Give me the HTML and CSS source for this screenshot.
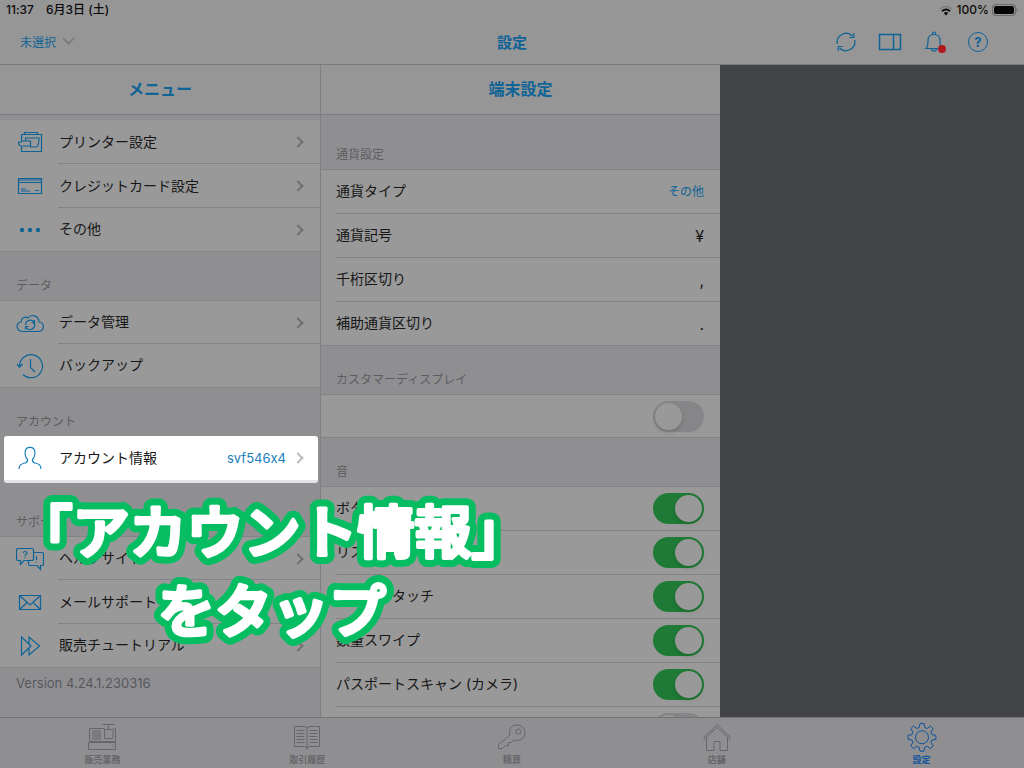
FILE: index.html
```html
<!DOCTYPE html>
<html lang="ja">
<head>
<meta charset="utf-8">
<title>設定</title>
<link rel="stylesheet" href="styles.css">
</head>
<body>
<div class="app">
  <header class="top">
    <div class="status">
      <span>11:37</span><span class="status-date">6月3日 (土)</span>
      <svg class="wifi" width="14" height="11" viewBox="0 0 14 11"><path d="M1 4Q7-1 13 4" fill="none" stroke="#7c7c7c" stroke-width="1.6"/><path d="M3 6.200Q7 2.800 11 6.200" fill="none" stroke="#0b0b0b" stroke-width="1.800"/><path d="M4.800 8Q7 6.200 9.200 8L7 10.500z" fill="#0b0b0b"/></svg>
      <span>100%</span>
      <svg class="battery" width="26" height="12" viewBox="0 0 26 12"><rect x=".5" y=".5" width="23" height="11" rx="3.500" fill="none" stroke="#6c6c6c"/><rect x="2" y="2" width="20" height="8" rx="2" fill="#050505" stroke="none"/><path d="M24.500 4v4q1.200-.5 1.200-2t-1.200-2z" fill="#6c6c6c" stroke="none"/></svg>
    </div>
    <nav class="bar">
      <button class="picker">未選択
        <svg width="13" height="8" viewBox="0 0 13 8"><path d="M1 1l5.500 5.500L12 1" fill="none" stroke="#777" stroke-width="1.600"/></svg>
      </button>
      <h1>設定</h1>
      <div class="tools">
        <button aria-label="更新"><svg width="22" height="22" viewBox="0 0 22 22"><path d="M2.300 13A9 9 0 0 1 17.500 5M19.700 9A9 9 0 0 1 4.500 17M18.800 2v4.500h-4.500M3.200 20v-4.500h4.500"/></svg></button>
        <button aria-label="表示"><svg width="24" height="18" viewBox="0 0 24 18"><path d="M1.500 1.500h21v15h-21zM15.500 1.500v15" stroke-width="1.500"/></svg></button>
        <button aria-label="通知"><svg width="24" height="24" viewBox="0 0 24 24"><path d="M4 18.500c2-1.500 2-3.500 2-8 0-4 2.500-6 6-6s6 2 6 6c0 4.500 0 6.500 2 8zM10.500 4.500V3.500a1.500 1.500 0 0 1 3 0v1M9.500 18.500a2.500 2.500 0 0 0 5 0"/><circle cx="20" cy="19" r="4" class="dot"/></svg></button>
        <button aria-label="ヘルプ" class="help"><span>?</span></button>
      </div>
    </nav>
  </header>

  <main class="panes">
    <section class="pane menu">
      <h2>メニュー</h2>
      <div class="scroll">
        <ul class="list first">
          <li><a href="#"><svg class="icon" viewBox="0 0 28 28"><path d="M5.500 13V6.500h3V4.500h13v2h4v17h-17M8.500 6.500h14M9.500 13v-3h13.500c0 5-.5 9-3 9h-6M2.500 14h3c.5 0 .5-1 1-1h8v5h-8M2.500 14c0 3 1 4 3 4M5.500 18v5.500h9"/></svg><span>プリンター設定</span><i></i></a></li>
          <li><a href="#"><svg class="icon" viewBox="0 0 28 28"><path d="M2.500 6.500h23v15h-23zM2.500 8h23M2.500 10.500h23M5 17h4.500M5 19h9M19 18.500h4"/></svg><span>クレジットカード設定</span><i></i></a></li>
          <li><a href="#"><svg class="icon" viewBox="0 0 28 28"><g class="solid"><circle cx="6" cy="14" r="2.200"/><circle cx="14" cy="14" r="2.200"/><circle cx="22" cy="14" r="2.200"/></g></svg><span>その他</span><i></i></a></li>
        </ul>
        <h3>データ</h3>
        <ul class="list">
          <li><a href="#"><svg class="icon" viewBox="0 0 28 28"><path d="M7 22.500C-.5 22.500-.5 13.500 5 13c0-4 4-6 7-4 3-4.500 11-2.500 11 4 6 .5 6 9.500-1 9.500zM9.500 16a4.800 4.800 0 0 1 8.500-3M18.500 14.500a4.800 4.800 0 0 1-8.500 4M18.500 11v3h-3M9.500 20.500v-3h3"/></svg><span>データ管理</span><i></i></a></li>
          <li><a href="#"><svg class="icon" viewBox="0 0 28 28"><path d="M3.500 14A11.500 11.500 0 1 1 7 22.500M1 12l2.500 3L6.500 12M14.500 7v8.500l4.500 4.500"/></svg><span>バックアップ</span></a></li>
        </ul>
        <h3>アカウント</h3>
        <ul class="list spot">
          <li><a href="#"><svg class="icon" viewBox="0 0 28 28"><path d="M3 25c0-4 2-5 6-6q3-1 2.500-3.500C9 13 9 10 9.200 7.500 9.500 2 18.500 2 18.800 7.500 19 10 19 13 16.500 15.500 16 18 19 19 19 19c4 1 6 2 6 6"/></svg><span>アカウント情報</span><b>svf546x4</b><i></i></a></li>
        </ul>
        <h3 class="support">サポート</h3>
        <ul class="list">
          <li><a href="#"><svg class="icon" viewBox="0 0 28 28"><path d="M2 3.500h14a1.500 1.500 0 0 1 1.500 1.500v9a1.500 1.500 0 0 1-1.500 1.500H8l-3.500 4v-4H2A1.500 1.500 0 0 1 .5 14V5A1.500 1.500 0 0 1 2 3.500zM17.500 7.500H26a1.500 1.500 0 0 1 1.500 1.500v10a1.500 1.500 0 0 1-1.500 1.500h-1.500v4l-3.500-4h-7a1.500 1.500 0 0 1-1.500-1.500v-3.500M20.500 11v4M20.500 16.500v1M7.200 8c0-2 3.800-2 3.800 0 0 1.500-2 1.500-2 3M9 12v1"/></svg><span>ヘルプサイト</span><i></i></a></li>
          <li><a href="#"><svg class="icon" viewBox="0 0 28 28"><path d="M3.500 7.500h21v14h-21zM3.500 7.500L14 17 24.500 7.500M3.500 21.500l7.500-7M24.500 21.500l-7.500-7"/></svg><span>メールサポート</span><i></i></a></li>
          <li><a href="#"><svg class="icon" viewBox="0 0 28 28"><path d="M5.500 5L15 14 5.500 23zM13 11.500V5l10.500 9L13 23v-6.500"/></svg><span>販売チュートリアル</span><i></i></a></li>
        </ul>
        <p class="version">Version 4.24.1.230316</p>
      </div>
    </section>

    <section class="pane detail">
      <h2>端末設定</h2>
      <div class="scroll">
        <h3 class="lead">通貨設定</h3>
        <ul class="list">
          <li><div><span>通貨タイプ</span><b class="small">その他</b></div></li>
          <li><div><span>通貨記号</span><em class="wide">¥</em></div></li>
          <li><div><span>千桁区切り</span><em>,</em></div></li>
          <li><div><span>補助通貨区切り</span><em>.</em></div></li>
        </ul>
        <h3>カスタマーディスプレイ</h3>
        <ul class="list">
          <li><div><input type="checkbox" aria-label="カスタマーディスプレイ"></div></li>
        </ul>
        <h3>音</h3>
        <ul class="list">
          <li><label><span>ボタンタッチ</span><input type="checkbox" checked></label></li>
          <li><label><span>リストタッチ</span><input type="checkbox" checked></label></li>
          <li><label><span>テンキータッチ</span><input type="checkbox" checked></label></li>
          <li><label><span>数量スワイプ</span><input type="checkbox" checked></label></li>
          <li><label><span>パスポートスキャン (カメラ)</span><input type="checkbox" checked></label></li>
          <li><div><input type="checkbox" aria-label="スキャン"></div></li>
        </ul>
      </div>
    </section>
    <div class="blank"></div>
  </main>

  <nav class="tabs">
    <a href="#"><svg viewBox="0 0 30 30"><path d="M2.500 6.500h15M2.500 6.500v13h26v-13h-2M17.500 7.500h8.500v9h-8.500zM21.500 7.500v-4M15.500 2.500h12M1.500 20.500h27v7h-27zM25 24h1M5 9h9M5 11h9M5 13h9M5 15h9M5 17h9"/></svg>販売業務</a>
    <a href="#"><svg viewBox="0 0 30 30"><path d="M2.500 4.500h10l2.500 1 2.500-1h10v20h-10l-2.500 1-2.500-1h-10zM15 5.500v22M4.500 8.500h8M4.500 11.500h8M4.500 14.500h8M4.500 17.500h8M4.500 20.500h8M17.500 8.500h8M17.500 11.500h8M17.500 14.500h8M17.500 17.500h8M17.500 20.500h8"/></svg>取引履歴</a>
    <a href="#"><svg viewBox="0 0 30 30"><path d="M13 13C11 7 15 3 20 3c5 0 8 4 8 8 0 5-5 9-11 7l-2.500 2.500h-3v3h-3l-3 3h-4v-4z"/><circle cx="21.500" cy="9.500" r="2.500"/></svg>精算</a>
    <a href="#"><svg viewBox="0 0 30 30"><path d="M1.500 15.500L15 2.500l13.500 13M1.500 18L15 5.300l13.500 12.700M4.500 15v13.500h7.500v-9h6v9h7.500V15"/></svg>店舗</a>
    <a href="#" class="on"><svg viewBox="0 0 30 30"><path d="M13 1.500h4l.8 4 2.400 1L23.500 4l2.700 2.800-2.300 3.300 1 2.500 4 .7v4l-4 .8-1 2.400 2.300 3.300-2.700 2.800-3.400-2.300-2.400 1-.7 3.900h-4l-.8-3.900-2.400-1-3.300 2.300-2.800-2.800L6 20.500l-1-2.400-3.900-.8v-4l3.900-.7 1-2.500-2.300-3.300L6.500 4l3.300 2.500 2.400-1z" stroke-linejoin="round"/><circle cx="15" cy="15.300" r="6.500"/></svg>設定</a>
  </nav>

  <svg class="callout" width="544" height="180" viewBox="0 0 544 180">
    <use href="#callout-text" class="callout-edge"/>
    <g class="callout-face"><text id="callout-text" text-anchor="middle"><tspan x="272" y="73">「アカウント情報」</tspan><tspan x="272" y="152">をタップ</tspan></text></g>
  </svg>
</div>
</body>
</html>
```
FILE: styles.css
```css
* { box-sizing: border-box; margin: 0; padding: 0; }
:root {
  --blue: #0f6396;
  --cell: #999999;
  --group: #8f8f92;
  --line: #838387;
}
body { font-family: Inter, "Noto Sans CJK JP", sans-serif; font-feature-settings: "calt" 0; font-size: 14px; color: #171717; background: var(--group); }
button { border: 0; background: none; font: inherit; color: inherit; }
a { color: inherit; text-decoration: none; }
ul { list-style: none; }
svg { fill: none; stroke: currentColor; stroke-width: 1.2; flex: none; }

.app { position: relative; height: 100vh; display: flex; flex-direction: column; overflow: hidden; }

.top { background: #969696; border-bottom: 1px solid #7b7b7e; }
.status { display: flex; align-items: center; height: 20px; padding: 0 6px; font-size: 12px; font-weight: 500; line-height: 20px; color: #0b0b0b; }
.status-date { margin-left: 12px; }
.wifi { margin: 0 4px 0 auto; stroke: none; }
.battery { margin-left: 3px; }
.bar { display: grid; grid-template-columns: 1fr auto 1fr; align-items: center; height: 44px; padding: 0 20px; color: var(--blue); }
.bar h1 { padding-bottom: 2px; font-size: 15px; font-weight: 700; }
.picker { display: flex; align-items: center; gap: 6px; justify-self: start; padding-bottom: 2px; font-size: 12px; }
.tools { display: flex; justify-content: flex-end; gap: 20px; margin-right: 14px; }
.tools button { display: flex; align-items: center; justify-content: center; width: 24px; height: 24px; }
.tools .dot { fill: #b0191e; stroke: none; }
.tools .help span { width: 20px; height: 20px; border: 1px solid; border-radius: 50%; font-size: 13px; font-weight: 700; line-height: 18px; }

.panes { flex: 1; min-height: 0; display: grid; grid-template-columns: 320px 400px 1fr; }
.pane { display: flex; flex-direction: column; min-height: 0; background: var(--group); }
.detail { border-left: 1px solid #7f7f83; }
.pane h2 { height: 50px; border-bottom: 1px solid #7b7b82; background: #969696; font-size: 16px; line-height: 48px; text-align: center; color: var(--blue); }
.scroll { flex: 1; min-height: 0; overflow: hidden; }
.blank { background: #434448; }

.pane h3 { display: flex; align-items: flex-end; height: 48px; padding: 0 16px 5px; font-size: 12px; font-weight: 400; line-height: 18px; color: #5d5d61; }
.pane h3.lead { height: 54px; }
.pane h3.support { height: 53px; }
.pane.detail h3 { padding-left: 15px; }

.list { background: var(--cell); border-top: 1px solid var(--line); border-bottom: 1px solid var(--line); }
.list li { height: 44px; padding-left: 16px; }
.list li:first-child, .list li:last-child { height: 43px; }
.detail .list li { padding-left: 15px; }
.detail .list li:first-child { height: 44px; }
.list li:only-child, .detail .list li:only-child { height: 42px; }
.list.first { margin-top: 5px; border-top: 0; }
.list.first li:first-child { height: 44px; }
.list li > * { display: flex; align-items: center; height: 100%; padding-right: 16px; border-bottom: 1px solid var(--line); }
.list li:last-child > * { border-bottom: 0; }
.list span { padding-bottom: 3px; }
.menu .list li > a { border-bottom: 0; }
.menu .list li { background: linear-gradient(var(--line), var(--line)) 58px 100% / 100% 1px no-repeat; }
.menu .list li:last-child { background: none; }
.icon { width: 28px; height: 28px; margin-right: 15px; color: var(--blue); }
.icon .solid { fill: currentColor; stroke: none; }
.list b { margin-left: auto; font-size: 13px; font-weight: 400; color: var(--blue); }
.list b.small { padding-bottom: 2px; font-size: 12px; }
.list em { margin-left: auto; font-size: 16px; font-style: normal; }
.list em.wide { font-size: 16px; }
.list i { width: 8px; height: 8px; margin-left: auto; margin-right: 2px; border: solid #707073; border-width: 2px 2px 0 0; transform: rotate(45deg); }
.list b + i { margin-left: 8px; }

.list.spot { margin: 0 2px 0 4px; border-top: 0; border-bottom: 3px solid #e3e3e8; border-radius: 3px; background: #ffffff; }
.list.spot li { height: 44px; padding-left: 12px; }
.spot li > a { padding-right: 14px; }
.spot .icon, .spot b { color: #1a80bd; }
.spot i { border-color: #bcbcc0; }

.version { padding: 6px 16px; font-size: 13px; line-height: 18px; color: #57575b; }

input[type="checkbox"] { appearance: none; width: 51px; height: 31px; margin-left: auto; padding: 2px; border-radius: 16px; background: #868688; }
input[type="checkbox"]::before { content: ""; display: block; width: 27px; height: 27px; border-radius: 50%; background: #999999; box-shadow: 0 2px 4px rgba(0, 0, 0, .15); }
input[type="checkbox"]:checked { background: #1f7a35; }
input[type="checkbox"]:checked::before { margin-left: auto; }

.tabs { display: flex; height: 51px; border-top: 1px solid #747477; background: #8f8f91; color: #66666a; }
.tabs a { flex: 1; display: flex; flex-direction: column; align-items: center; padding-top: 4px; font-size: 9px; font-weight: 700; line-height: 14px; }
.tabs svg { width: 30px; height: 30px; margin-bottom: 1px; stroke-width: 1; }
.tabs .on { color: #0d539d; }

.callout { position: absolute; left: 0; top: 480px; pointer-events: none; font-family: "Noto Sans CJK JP", sans-serif; font-size: 57px; font-weight: 500; stroke-linejoin: round; }
.callout-edge { fill: #07bd62; stroke: #07bd62; stroke-width: 18px; }
.callout-face { fill: #ffffff; stroke: #ffffff; stroke-width: 4px; }
```
